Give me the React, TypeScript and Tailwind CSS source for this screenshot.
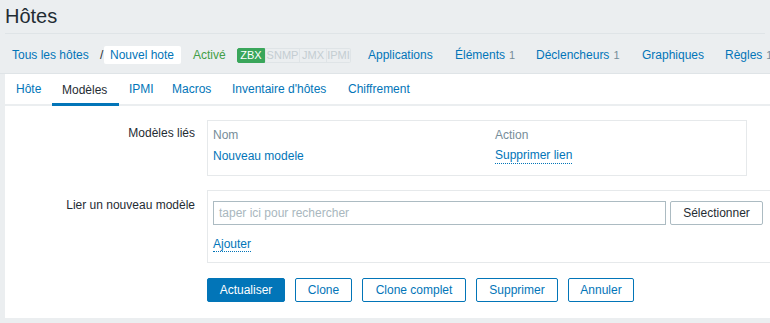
import React from 'react';

const navLinks: { label: string; count?: string; width: string }[] = [
  { label: 'Applications', width: 'w-[87px]' },
  { label: 'Éléments', count: '1', width: 'w-[81px]' },
  { label: 'Déclencheurs', count: '1', width: 'w-[106px]' },
  { label: 'Graphiques', width: 'w-[83px]' },
  { label: 'Règles', count: '1', width: 'w-[60px]' },
];

const tabs: { label: string; width: string }[] = [
  { label: 'Hôte', width: 'w-[46px]' },
  { label: 'Modèles', width: 'w-[67px]' },
  { label: 'IPMI', width: 'w-[43px]' },
  { label: 'Macros', width: 'w-[60px]' },
  { label: "Inventaire d'hôtes", width: 'w-[116px]' },
  { label: 'Chiffrement', width: 'w-[90px]' },
];

const App: React.FC = () => {
  return (
    <div
      className="w-[770px] h-[323px] overflow-hidden bg-[#ebeef0] text-[12px] text-[#1f2c33]"
      style={{ fontFamily: '"Liberation Sans", Arial, sans-serif' }}
    >
      {/* page title */}
      <div className="h-[34px] mx-[5px] border-b border-[#dfe4e7] flex items-start">
        <h1 className="text-[20px] leading-[20px] mt-[6px] text-[#1f2c33]">Hôtes</h1>
      </div>

      {/* breadcrumbs + host navigation */}
      <div className="h-[40px] pt-[3px] border-b border-[#dfe4e7] flex items-center whitespace-nowrap overflow-hidden">
        <span className="shrink-0 ml-[12px] w-[80px] text-[#0275b8]">Tous les hôtes</span>
        <span className="shrink-0 ml-[8px] w-[4px] text-[#1f2c33]">/</span>
        <span className="shrink-0 h-[18px] w-[77px] pl-[6px] bg-white flex items-center text-[#0275b8] rounded-[2px]">Nouvel hote</span>
        <span className="shrink-0 ml-[12px] w-[44px] text-[#429e47]">Activé</span>
        <div className="shrink-0 flex h-[15px] text-[11px] leading-[13px] text-center">
          <span className="w-[28px] bg-[#3aa65b] text-white border border-[#3aa65b] rounded-l-[2px]">ZBX</span>
          <span className="w-[35px] text-[#c4cdd2] border border-[#dfe4e7]">SNMP</span>
          <span className="w-[27px] text-[#c4cdd2] border border-l-0 border-[#dfe4e7]">JMX</span>
          <span className="w-[24px] text-[#c4cdd2] border border-l-0 border-[#dfe4e7] rounded-r-[2px]">IPMI</span>
        </div>
        <div className="shrink-0 ml-[17px] flex">
          {navLinks.map(item => (
            <span key={item.label} className={`${item.width} shrink-0 text-[#0275b8]`}>
              {item.label}
              {item.count && <span className="ml-[4px] text-[11px] text-[#768d99]">{item.count}</span>}
            </span>
          ))}
        </div>
      </div>

      {/* form panel */}
      <div className="ml-[5px] bg-white h-[244px]">
        <div className="h-[32px] pl-px flex border-b-2 border-[#ebeef0]">
          {tabs.map(tab => (
            <div
              key={tab.label}
              className={`${tab.width} shrink-0 pl-[10px] flex items-center whitespace-nowrap ${
                tab.label === 'Modèles'
                  ? 'text-[#1f2c33] border-b-[3px] border-[#0275b8] mb-[-2px] pt-[3px]'
                  : 'text-[#0275b8]'
              }`}
            >
              {tab.label}
            </div>
          ))}
        </div>

        <div className="pt-[14px]">
          <div className="flex">
            <div className="w-[191px] text-right pt-[4px] pr-[1px]">Modèles liés</div>
            <div className="ml-[11px] w-[540px] h-[56px] border border-[#e6e9eb] px-[5px] pt-[6px]">
              <div className="flex text-[#768d99] leading-[16px]">
                <span className="w-[282px]">Nom</span>
                <span>Action</span>
              </div>
              <div className="flex mt-[5px] leading-[16px]">
                <span className="w-[282px] text-[#0275b8]">Nouveau modele</span>
                <span className="text-[#0275b8] border-b border-dotted border-[#0275b8] leading-[14px]">Supprimer lien</span>
              </div>
            </div>
          </div>

          <div className="flex mt-[14px]">
            <div className="w-[191px] text-right pt-[6px] pr-[1px]">Lier un nouveau modèle</div>
            <div className="ml-[11px] flex-1 h-[73px] border border-r-0 border-[#e6e9eb] pl-[5px] pt-[10px]">
              <div className="flex">
                <div className="w-[453px] h-[24px] border border-[#acbbc2] px-[5px] flex items-center text-[#a9b7be]">
                  taper ici pour rechercher
                </div>
                <button className="ml-[4px] h-[24px] w-[93px] border border-[#acbbc2] rounded-[2px] bg-white text-[#1f2c33]">
                  Sélectionner
                </button>
              </div>
              <div className="mt-[10px]">
                <span className="text-[#0275b8] border-b border-dotted border-[#0275b8] leading-[14px] inline-block">Ajouter</span>
              </div>
            </div>
          </div>

          <div className="flex mt-[15px] ml-[202px] gap-[10px]">
            <button className="h-[24px] w-[78px] bg-[#0275b8] border border-[#0275b8] rounded-[2px] text-white">Actualiser</button>
            <button className="h-[24px] w-[57px] border border-[#0275b8] rounded-[2px] text-[#0275b8] bg-white">Clone</button>
            <button className="h-[24px] w-[104px] border border-[#0275b8] rounded-[2px] text-[#0275b8] bg-white">Clone complet</button>
            <button className="h-[24px] w-[82px] border border-[#0275b8] rounded-[2px] text-[#0275b8] bg-white">Supprimer</button>
            <button className="h-[24px] w-[66px] border border-[#0275b8] rounded-[2px] text-[#0275b8] bg-white">Annuler</button>
          </div>
        </div>
      </div>
    </div>
  );
};

export default App;
